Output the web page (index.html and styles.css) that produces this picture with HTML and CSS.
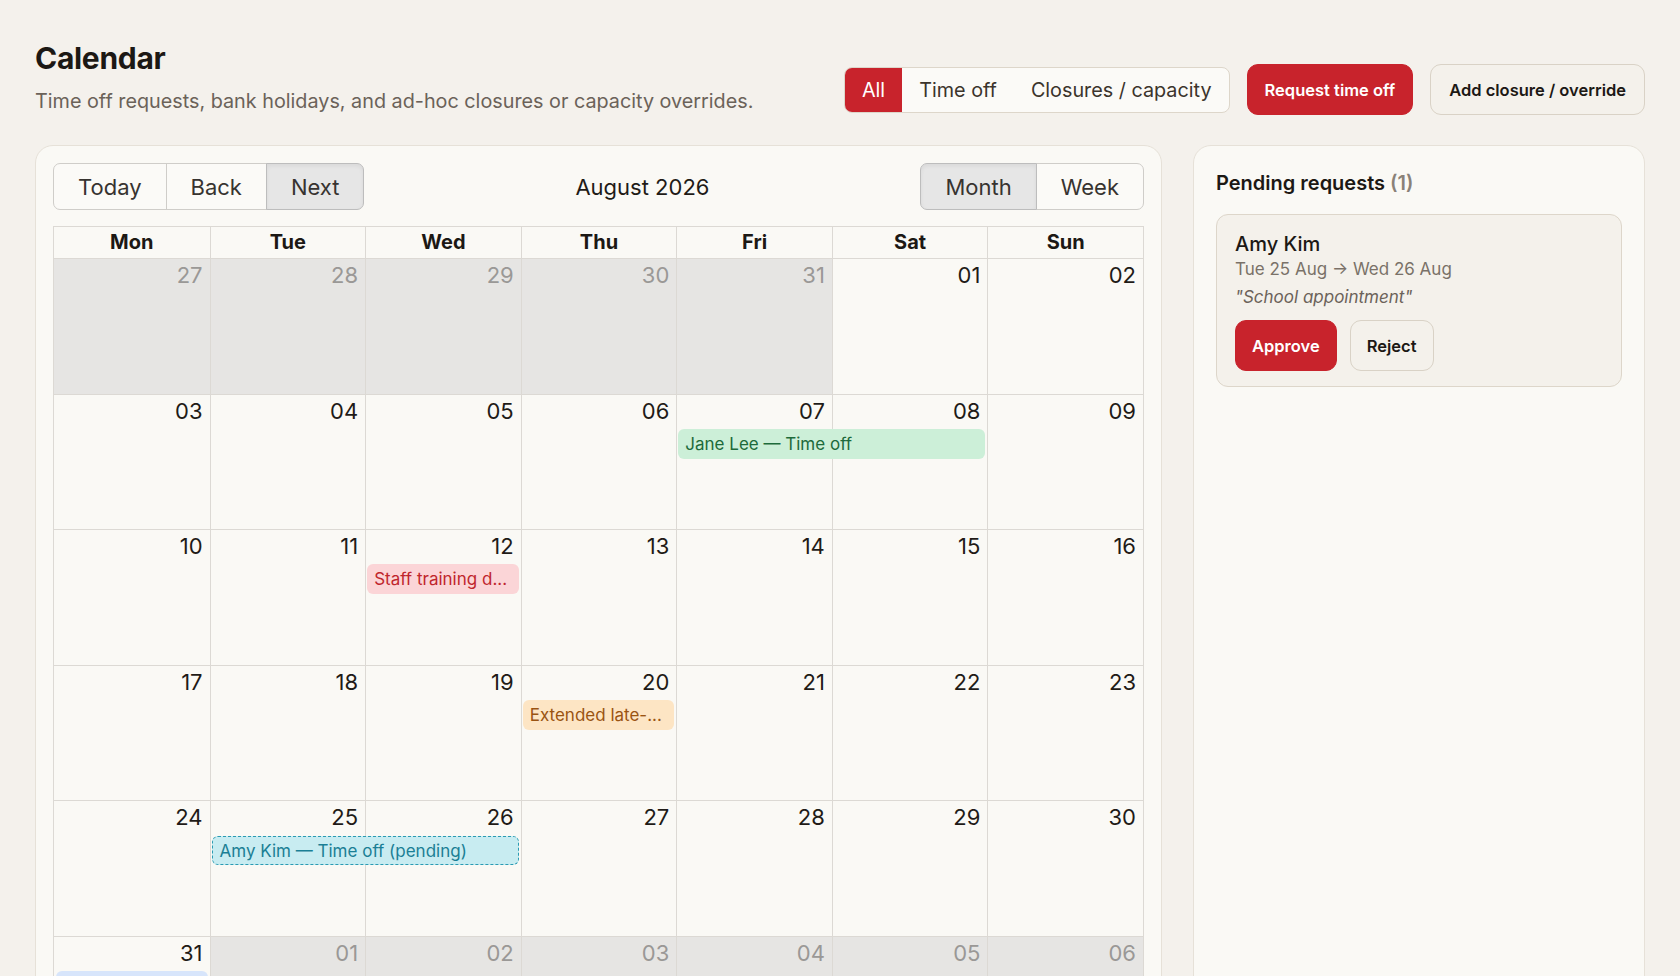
FILE: index.html
```html
<!DOCTYPE html>
<html>
<head>
<meta charset="utf-8" />
<title>Calendar</title>
<link rel="stylesheet" href="styles.css">
</head>
<body>

<div class="page">

	<div class="head">
		<div class="head-text">
			<h1>Calendar</h1>
			<p class="sub">Time off requests, bank holidays, and ad-hoc closures or capacity overrides.</p>
		</div>

		<div class="actions">
			<div class="filter">
				<button class="seg active">All</button>
				<button class="seg">Time off</button>
				<button class="seg">Closures / capacity</button>
			</div>
			<button class="btn btn-red">Request time off</button>
			<button class="btn btn-plain">Add closure / override</button>
		</div>
	</div>

	<div class="layout">

		<div class="card cal">
			<div class="toolbar">
				<div class="group">
					<button>Today</button>
					<button>Back</button>
					<button class="on">Next</button>
				</div>
				<div class="label">August 2026</div>
				<div class="group">
					<button class="on">Month</button>
					<button>Week</button>
				</div>
			</div>

			<div class="month">
				<div class="days-head">
					<div>Mon</div><div>Tue</div><div>Wed</div><div>Thu</div><div>Fri</div><div>Sat</div><div>Sun</div>
				</div>

				<div class="week">
					<div class="day off"><span>27</span></div>
					<div class="day off"><span>28</span></div>
					<div class="day off"><span>29</span></div>
					<div class="day off"><span>30</span></div>
					<div class="day off"><span>31</span></div>
					<div class="day"><span>01</span></div>
					<div class="day"><span>02</span></div>
				</div>

				<div class="week">
					<div class="day"><span>03</span></div>
					<div class="day"><span>04</span></div>
					<div class="day"><span>05</span></div>
					<div class="day"><span>06</span></div>
					<div class="day"><span>07</span></div>
					<div class="day"><span>08</span></div>
					<div class="day"><span>09</span></div>
					<div class="ev green c5 s2">Jane Lee — Time off</div>
				</div>

				<div class="week">
					<div class="day"><span>10</span></div>
					<div class="day"><span>11</span></div>
					<div class="day"><span>12</span></div>
					<div class="day"><span>13</span></div>
					<div class="day"><span>14</span></div>
					<div class="day"><span>15</span></div>
					<div class="day"><span>16</span></div>
					<div class="ev red c3">Staff training d...</div>
				</div>

				<div class="week">
					<div class="day"><span>17</span></div>
					<div class="day"><span>18</span></div>
					<div class="day"><span>19</span></div>
					<div class="day"><span>20</span></div>
					<div class="day"><span>21</span></div>
					<div class="day"><span>22</span></div>
					<div class="day"><span>23</span></div>
					<div class="ev orange c4">Extended late-...</div>
				</div>

				<div class="week">
					<div class="day"><span>24</span></div>
					<div class="day"><span>25</span></div>
					<div class="day"><span>26</span></div>
					<div class="day"><span>27</span></div>
					<div class="day"><span>28</span></div>
					<div class="day"><span>29</span></div>
					<div class="day"><span>30</span></div>
					<div class="ev pending c2 s2">Amy Kim — Time off (pending)</div>
				</div>

				<div class="week">
					<div class="day"><span>31</span></div>
					<div class="day off"><span>01</span></div>
					<div class="day off"><span>02</span></div>
					<div class="day off"><span>03</span></div>
					<div class="day off"><span>04</span></div>
					<div class="day off"><span>05</span></div>
					<div class="day off"><span>06</span></div>
					<div class="ev blue c1">Summer bank holiday</div>
				</div>
			</div>
		</div>

		<div class="card side">
			<h3>Pending requests <span class="count">(1)</span></h3>

			<div class="req">
				<div class="req-name">Amy Kim</div>
				<div class="req-dates">Tue 25 Aug → Wed 26 Aug</div>
				<div class="req-note">"School appointment"</div>
				<div class="req-btns">
					<button class="btn btn-red">Approve</button>
					<button class="btn btn-plain">Reject</button>
				</div>
			</div>
		</div>

	</div>
</div>

</body>
</html>
```

FILE: styles.css
```css
body {
	margin: 0;
	background: #f4f1ec;
	color: #1c1814;
	font-family: Inter, "Noto Sans", sans-serif;
}

button {
	font-family: inherit;
	cursor: pointer;
}

.page {
	padding: 40px 35px 0;
}

/* top bar */
.head {
	display: flex;
	justify-content: space-between;
	align-items: flex-end;
}

h1 {
	margin: 0;
	font-size: 30px;
	line-height: 36px;
	font-weight: 700;
	letter-spacing: -0.3px;
}

.sub {
	margin: 12px 0 1px;
	font-size: 19.8px;
	line-height: 26px;
	color: #6b6259;
}

.actions {
	display: flex;
	align-items: center;
	gap: 17px;
}

.filter {
	display: flex;
	height: 46px;
	border: 1px solid #ddd6ca;
	border-radius: 8px;
	overflow: hidden;
	background: #fbfaf7;
	box-sizing: border-box;
}

.seg {
	border: 0;
	background: none;
	padding: 0 17px;
	font-size: 19.8px;
	color: #3b342c;
}

.seg.active {
	background: #c8232c;
	color: #fff;
}

.btn {
	height: 51px;
	padding: 0 17px;
	border-radius: 11px;
	font-size: 16.5px;
	font-weight: 600;
}

.btn-red {
	background: #c8232c;
	border: 1px solid #c8232c;
	color: #fff;
}

.btn-plain {
	background: #f4f1eb;
	border: 1px solid #d9d2c6;
	color: #1c1814;
	padding: 0 18px;
}

/* columns */
.layout {
	display: grid;
	grid-template-columns: 1fr 452px;
	gap: 31px;
	margin-top: 30px;
}

.card {
	background: #faf9f5;
	border: 1px solid #e6e1d8;
	border-radius: 18px;
}

.cal {
	padding: 17px 17px 24px;
}

.toolbar {
	display: flex;
	align-items: center;
	height: 47px;
	margin-bottom: 16px;
}

.toolbar .label {
	flex: 1;
	text-align: center;
	font-size: 22px;
	color: #1f1b17;
}

.group {
	display: flex;
	height: 100%;
}

.group button {
	border: 1px solid #cfcdc9;
	background: #fbfaf7;
	padding: 0 24px;
	font-size: 22px;
	color: #373330;
}

.group button + button {
	margin-left: -1px;
}

.group button:first-child {
	border-radius: 7px 0 0 7px;
}

.group button:last-child {
	border-radius: 0 7px 7px 0;
}

.group button.on {
	background: #e6e6e6;
	border-color: #bdbdbd;
	box-shadow: inset 0 2px 4px rgba(0, 0, 0, 0.06);
	position: relative;
}

/* month grid */
.month {
	border: 1px solid #dcd9d4;
}

.days-head {
	display: grid;
	grid-template-columns: repeat(7, minmax(0, 1fr));
	height: 31px;
}

.days-head div {
	text-align: center;
	font-size: 20px;
	font-weight: 700;
	line-height: 31px;
	color: #1c1814;
}

.days-head div + div {
	border-left: 1px solid #dcd9d4;
}

.week {
	display: grid;
	grid-template-columns: repeat(7, minmax(0, 1fr));
	grid-template-rows: 34px 30px 1fr;
	height: 135.6px;
	box-sizing: border-box;
	border-top: 1px solid #dcd9d4;
}

.day {
	grid-row: 1 / 4;
	text-align: right;
	padding: 3px 7px 0;
	font-size: 22px;
	line-height: 26px;
	color: #1f1b17;
}

.day:nth-child(1) { grid-column: 1; }
.day:nth-child(2) { grid-column: 2; }
.day:nth-child(3) { grid-column: 3; }
.day:nth-child(4) { grid-column: 4; }
.day:nth-child(5) { grid-column: 5; }
.day:nth-child(6) { grid-column: 6; }
.day:nth-child(7) { grid-column: 7; }

.day:not(:first-child) {
	border-left: 1px solid #dcd9d4;
}

.day.off {
	background: #e6e5e3;
	color: #9a9896;
}

.ev {
	grid-row: 2;
	margin: 0 2px;
	padding: 0 7px;
	border-radius: 6px;
	font-size: 17px;
	line-height: 30px;
	white-space: nowrap;
	overflow: hidden;
}

.c1 { grid-column-start: 1; }
.c2 { grid-column-start: 2; }
.c3 { grid-column-start: 3; }
.c4 { grid-column-start: 4; }
.c5 { grid-column-start: 5; }
.s2 { grid-column-end: span 2; }

.green  { background: #ccefd8; color: #1d6a3b; }
.red    { background: #fbd5d7; color: #c0262d; }
.orange { background: #fde5c4; color: #9a5412; }
.blue   { background: #d7e5fb; color: #2c5bb8; }

.pending {
	background: #c8ecf1;
	color: #1b7f95;
	border: 1px dashed #2b9bb3;
	line-height: 28px;
	margin-top: 1px;
}

/* side panel */
.side {
	padding: 24px 22px;
	align-self: stretch;
}

.side h3 {
	margin: 0 0 18px;
	font-size: 20px;
	line-height: 26px;
	font-weight: 600;
}

.count {
	color: #8a8178;
}

.req {
	background: #f4f1eb;
	border: 1px solid #ddd6ca;
	border-radius: 12px;
	padding: 16px 18px 15px;
}

.req-name {
	font-size: 20px;
	line-height: 26px;
	font-weight: 500;
}

.req-dates {
	font-size: 17px;
	line-height: 24px;
	color: #7a7168;
}

.req-note {
	font-size: 17px;
	line-height: 32px;
	font-style: italic;
	color: #6b6259;
}

.req-btns {
	display: flex;
	gap: 13px;
	margin-top: 7px;
}

.req-btns .btn {
	padding: 0 16px;
}
```
